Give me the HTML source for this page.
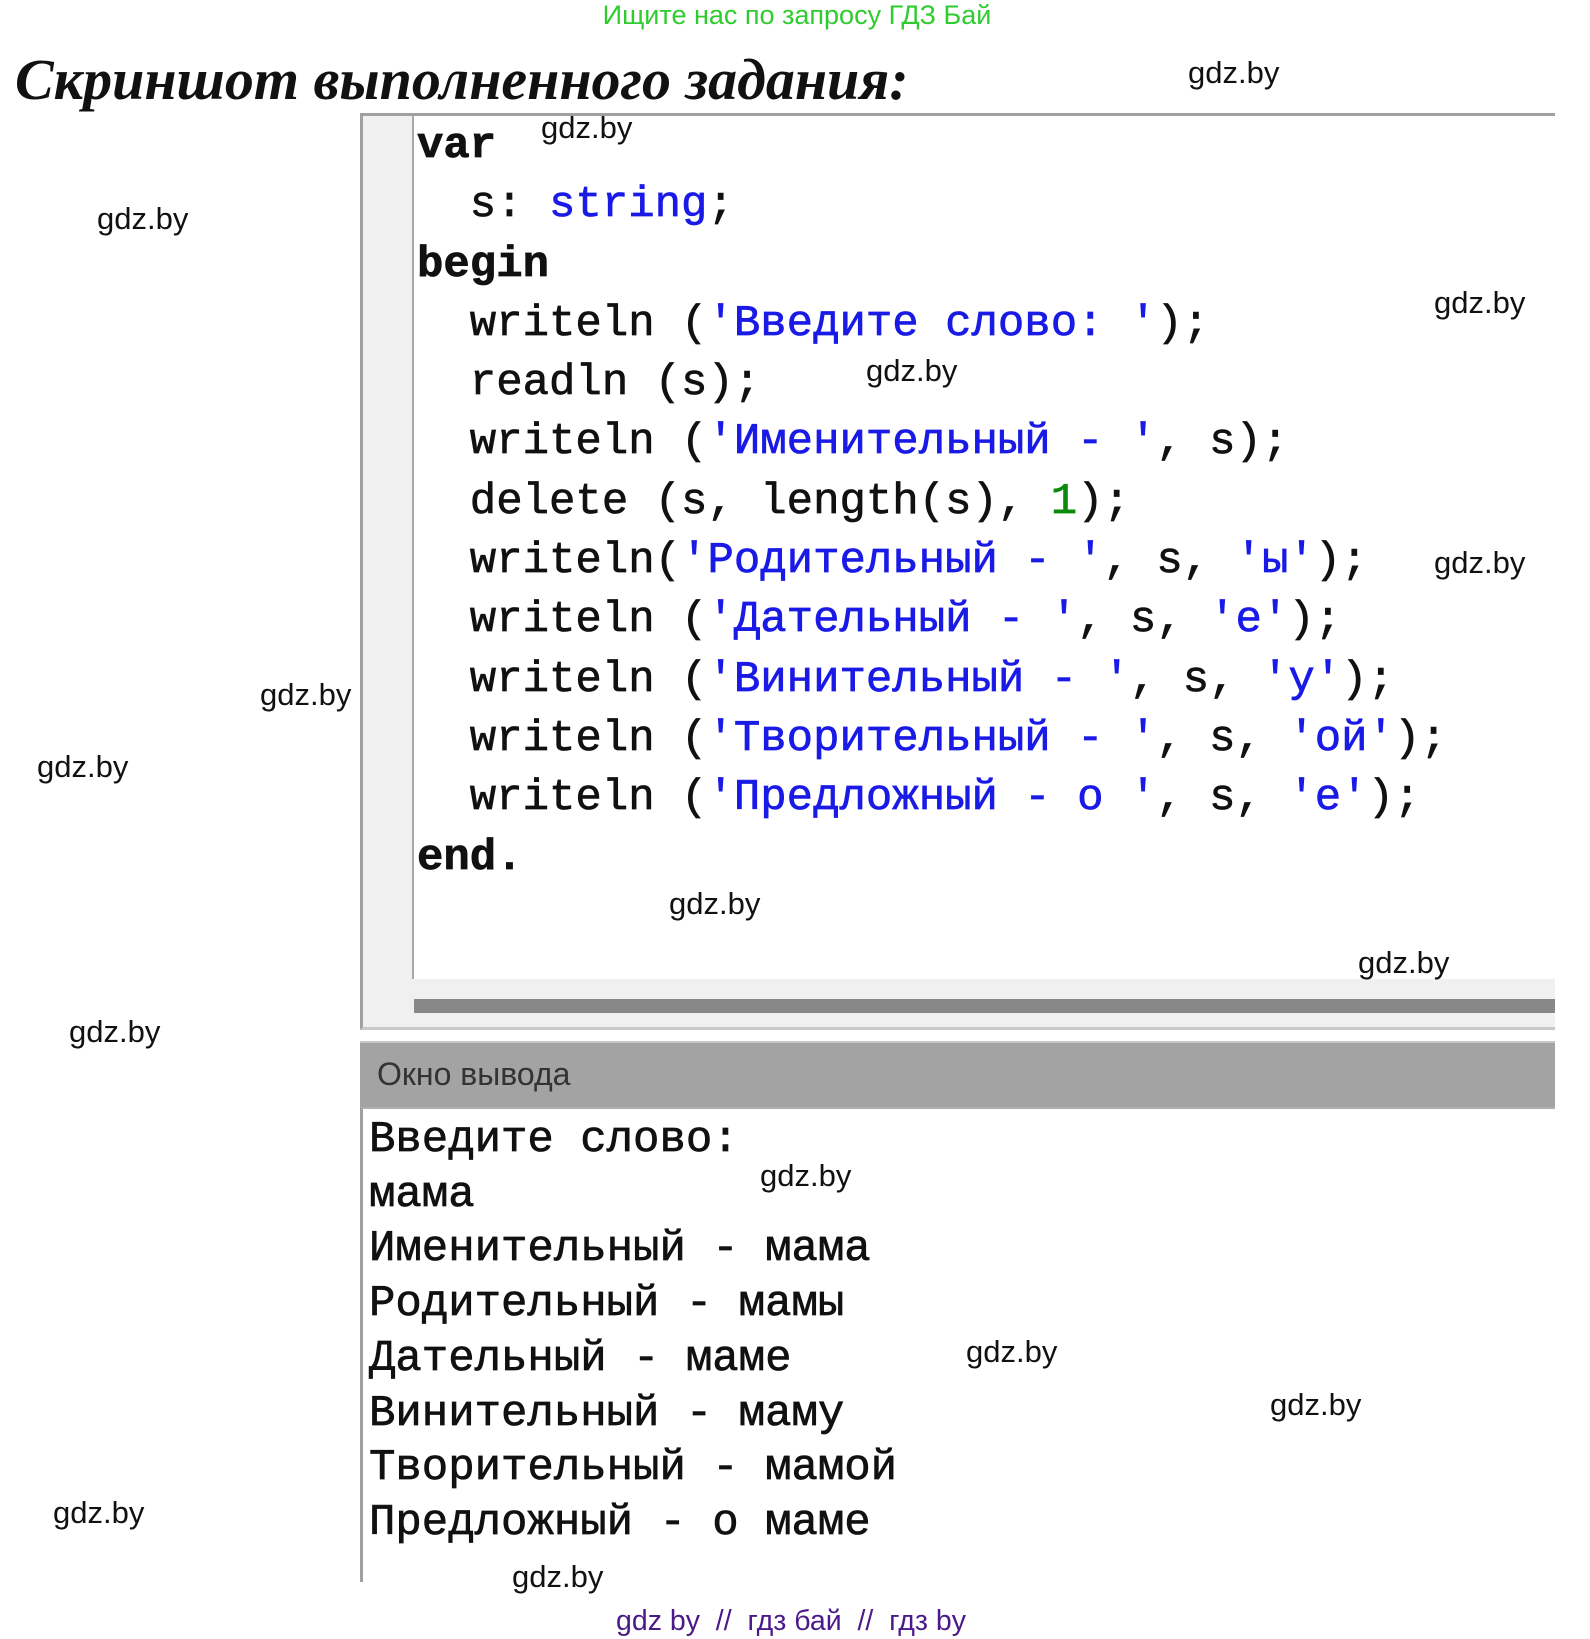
<!DOCTYPE html>
<html><head><meta charset="utf-8">
<style>
body{margin:0;width:1590px;height:1639px;background:#fff;position:relative;overflow:hidden;font-family:"Liberation Sans",sans-serif}
.a{position:absolute}
.wm{position:absolute;font-size:31px;line-height:30px;color:#111;font-family:"Liberation Sans",sans-serif}
.code{position:absolute;left:417px;top:117px;font-family:"Liberation Mono",monospace;font-size:44px;line-height:59.3px;white-space:pre;color:#111;-webkit-text-stroke:0.7px currentColor}
.out{position:absolute;left:369px;top:1113px;font-family:"Liberation Mono",monospace;font-size:44px;line-height:54.7px;white-space:pre;color:#111;-webkit-text-stroke:0.7px currentColor}
b{font-weight:bold}
.s{color:#1a1ae6}
.n{color:#0a8a0a}
</style></head><body>
<div class="a" style="left:0;width:1590px;top:0;text-align:center;font-size:27px;line-height:30px;color:#2ecc2e;padding-left:4px;box-sizing:border-box">Ищите нас по запросу ГДЗ Бай</div>
<div class="a" style="left:15px;top:45px;font-family:'Liberation Serif',serif;font-style:italic;font-weight:bold;font-size:58px;line-height:70px;color:#111">Скриншот выполненного задания:</div>

<div class="a" style="left:360px;top:113px;width:1195px;height:917px;border-top:3px solid #a0a0a0;border-left:3px solid #a0a0a0;border-bottom:3px solid #c8c8c8;box-sizing:border-box;background:#fff"></div>
<div class="a" style="left:363px;top:116px;width:49px;height:863px;background:#f0f0f0;border-right:2px solid #a8a8a8"></div>
<div class="a" style="left:363px;top:979px;width:1192px;height:48px;background:#f0f0f0"></div>
<div class="a" style="left:414px;top:999px;width:1141px;height:14px;background:#888"></div>

<div class="code"><b>var</b>
  s: <span class="s">string</span>;
<b>begin</b>
  writeln (<span class="s">'Введите слово: '</span>);
  readln (s);
  writeln (<span class="s">'Именительный - '</span>, s);
  delete (s, length(s), <span class="n">1</span>);
  writeln(<span class="s">'Родительный - '</span>, s, <span class="s">'ы'</span>);
  writeln (<span class="s">'Дательный - '</span>, s, <span class="s">'е'</span>);
  writeln (<span class="s">'Винительный - '</span>, s, <span class="s">'у'</span>);
  writeln (<span class="s">'Творительный - '</span>, s, <span class="s">'ой'</span>);
  writeln (<span class="s">'Предложный - о '</span>, s, <span class="s">'е'</span>);
<b>end.</b></div>

<div class="a" style="left:360px;top:1041px;width:1195px;height:66px;background:#a3a3a3;border-top:2px solid #c8c8c8;box-sizing:border-box"></div>
<div class="a" style="left:377px;top:1057px;font-size:32px;line-height:34px;color:#333">Окно вывода</div>
<div class="a" style="left:360px;top:1107px;width:1195px;height:475px;border-left:3px solid #a0a0a0;border-top:2px solid #b0b0b0;box-sizing:border-box"></div>
<div class="out">Введите слово:
мама
Именительный - мама
Родительный - мамы
Дательный - маме
Винительный - маму
Творительный - мамой
Предложный - о маме</div>

<div class="wm" style="left:1188px;top:58px">gdz.by</div>
<div class="wm" style="left:541px;top:113px">gdz.by</div>
<div class="wm" style="left:97px;top:204px">gdz.by</div>
<div class="wm" style="left:1434px;top:288px">gdz.by</div>
<div class="wm" style="left:866px;top:356px">gdz.by</div>
<div class="wm" style="left:1434px;top:548px">gdz.by</div>
<div class="wm" style="left:260px;top:680px">gdz.by</div>
<div class="wm" style="left:37px;top:752px">gdz.by</div>
<div class="wm" style="left:669px;top:889px">gdz.by</div>
<div class="wm" style="left:1358px;top:948px">gdz.by</div>
<div class="wm" style="left:69px;top:1017px">gdz.by</div>
<div class="wm" style="left:760px;top:1161px">gdz.by</div>
<div class="wm" style="left:966px;top:1337px">gdz.by</div>
<div class="wm" style="left:1270px;top:1390px">gdz.by</div>
<div class="wm" style="left:53px;top:1498px">gdz.by</div>
<div class="wm" style="left:512px;top:1562px">gdz.by</div>
<div class="a" style="left:616px;top:1605px;font-size:28.5px;line-height:32px;color:#4b1a8a;white-space:pre">gdz by  //  гдз бай  //  гдз by</div>
</body></html>
